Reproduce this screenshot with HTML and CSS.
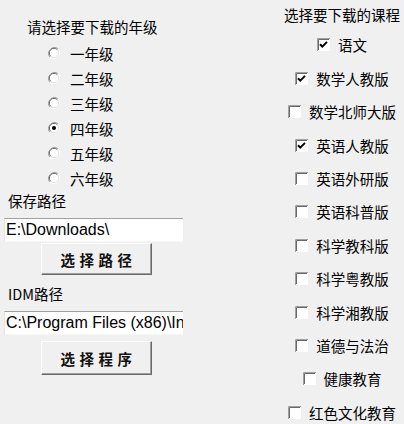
FILE: index.html
```html
<!DOCTYPE html>
<html lang="zh-CN">
<head>
<meta charset="utf-8">
<title>下载</title>
<link rel="stylesheet" href="styles.css">
</head>
<body>
<div class="app">
  <div class="left">
    <div class="title">请选择要下载的年级</div>
    <div class="radios">
      <div class="radio"><svg class="rb" viewBox="0 0 12 12"><path d="M10.2 1.8A6 6 0 0 0 1.8 10.2" fill="none" stroke="#a0a0a0"/><path d="M1.8 10.2A6 6 0 0 0 10.2 1.8" fill="none" stroke="#fff"/><circle cx="6" cy="6" r="4.6" fill="#fff"/><path d="M9.3 2.7A4.6 4.6 0 0 0 2.7 9.3" fill="none" stroke="#696969"/><path d="M2.7 9.3A4.6 4.6 0 0 0 9.3 2.7" fill="none" stroke="#e3e3e3"/></svg><span>一年级</span></div>
      <div class="radio"><svg class="rb" viewBox="0 0 12 12"><path d="M10.2 1.8A6 6 0 0 0 1.8 10.2" fill="none" stroke="#a0a0a0"/><path d="M1.8 10.2A6 6 0 0 0 10.2 1.8" fill="none" stroke="#fff"/><circle cx="6" cy="6" r="4.6" fill="#fff"/><path d="M9.3 2.7A4.6 4.6 0 0 0 2.7 9.3" fill="none" stroke="#696969"/><path d="M2.7 9.3A4.6 4.6 0 0 0 9.3 2.7" fill="none" stroke="#e3e3e3"/></svg><span>二年级</span></div>
      <div class="radio"><svg class="rb" viewBox="0 0 12 12"><path d="M10.2 1.8A6 6 0 0 0 1.8 10.2" fill="none" stroke="#a0a0a0"/><path d="M1.8 10.2A6 6 0 0 0 10.2 1.8" fill="none" stroke="#fff"/><circle cx="6" cy="6" r="4.6" fill="#fff"/><path d="M9.3 2.7A4.6 4.6 0 0 0 2.7 9.3" fill="none" stroke="#696969"/><path d="M2.7 9.3A4.6 4.6 0 0 0 9.3 2.7" fill="none" stroke="#e3e3e3"/></svg><span>三年级</span></div>
      <div class="radio"><svg class="rb" viewBox="0 0 12 12"><path d="M10.2 1.8A6 6 0 0 0 1.8 10.2" fill="none" stroke="#a0a0a0"/><path d="M1.8 10.2A6 6 0 0 0 10.2 1.8" fill="none" stroke="#fff"/><circle cx="6" cy="6" r="4.6" fill="#fff"/><path d="M9.3 2.7A4.6 4.6 0 0 0 2.7 9.3" fill="none" stroke="#696969"/><path d="M2.7 9.3A4.6 4.6 0 0 0 9.3 2.7" fill="none" stroke="#e3e3e3"/><circle cx="6" cy="6" r="2" fill="#000"/></svg><span>四年级</span></div>
      <div class="radio"><svg class="rb" viewBox="0 0 12 12"><path d="M10.2 1.8A6 6 0 0 0 1.8 10.2" fill="none" stroke="#a0a0a0"/><path d="M1.8 10.2A6 6 0 0 0 10.2 1.8" fill="none" stroke="#fff"/><circle cx="6" cy="6" r="4.6" fill="#fff"/><path d="M9.3 2.7A4.6 4.6 0 0 0 2.7 9.3" fill="none" stroke="#696969"/><path d="M2.7 9.3A4.6 4.6 0 0 0 9.3 2.7" fill="none" stroke="#e3e3e3"/></svg><span>五年级</span></div>
      <div class="radio"><svg class="rb" viewBox="0 0 12 12"><path d="M10.2 1.8A6 6 0 0 0 1.8 10.2" fill="none" stroke="#a0a0a0"/><path d="M1.8 10.2A6 6 0 0 0 10.2 1.8" fill="none" stroke="#fff"/><circle cx="6" cy="6" r="4.6" fill="#fff"/><path d="M9.3 2.7A4.6 4.6 0 0 0 2.7 9.3" fill="none" stroke="#696969"/><path d="M2.7 9.3A4.6 4.6 0 0 0 9.3 2.7" fill="none" stroke="#e3e3e3"/></svg><span>六年级</span></div>
    </div>
    <div class="label first">保存路径</div>
    <div class="edit">E:\Downloads\</div>
    <div class="btn">选择路径</div>
    <div class="label second">IDM路径</div>
    <div class="edit">C:\Program Files (x86)\Internet Download Manager\IDMan.exe</div>
    <div class="btn">选择程序</div>
  </div>
  <div class="right">
    <div class="title">选择要下载的课程</div>
    <div class="checks">
      <div class="check"><svg class="cb" viewBox="0 0 13 13"><rect x="0" y="0" width="13" height="13" fill="#fff"/><path d="M0.5 13V0.5H13" fill="none" stroke="#a0a0a0"/><path d="M1.5 12V1.5H12" fill="none" stroke="#696969"/><path d="M3 6.2l2.3 2.4L10 3.9" fill="none" stroke="#000" stroke-width="2"/></svg><span>语文</span></div>
      <div class="check"><svg class="cb" viewBox="0 0 13 13"><rect x="0" y="0" width="13" height="13" fill="#fff"/><path d="M0.5 13V0.5H13" fill="none" stroke="#a0a0a0"/><path d="M1.5 12V1.5H12" fill="none" stroke="#696969"/><path d="M3 6.2l2.3 2.4L10 3.9" fill="none" stroke="#000" stroke-width="2"/></svg><span>数学人教版</span></div>
      <div class="check"><svg class="cb" viewBox="0 0 13 13"><rect x="0" y="0" width="13" height="13" fill="#fff"/><path d="M0.5 13V0.5H13" fill="none" stroke="#a0a0a0"/><path d="M1.5 12V1.5H12" fill="none" stroke="#696969"/></svg><span>数学北师大版</span></div>
      <div class="check"><svg class="cb" viewBox="0 0 13 13"><rect x="0" y="0" width="13" height="13" fill="#fff"/><path d="M0.5 13V0.5H13" fill="none" stroke="#a0a0a0"/><path d="M1.5 12V1.5H12" fill="none" stroke="#696969"/><path d="M3 6.2l2.3 2.4L10 3.9" fill="none" stroke="#000" stroke-width="2"/></svg><span>英语人教版</span></div>
      <div class="check"><svg class="cb" viewBox="0 0 13 13"><rect x="0" y="0" width="13" height="13" fill="#fff"/><path d="M0.5 13V0.5H13" fill="none" stroke="#a0a0a0"/><path d="M1.5 12V1.5H12" fill="none" stroke="#696969"/></svg><span>英语外研版</span></div>
      <div class="check"><svg class="cb" viewBox="0 0 13 13"><rect x="0" y="0" width="13" height="13" fill="#fff"/><path d="M0.5 13V0.5H13" fill="none" stroke="#a0a0a0"/><path d="M1.5 12V1.5H12" fill="none" stroke="#696969"/></svg><span>英语科普版</span></div>
      <div class="check"><svg class="cb" viewBox="0 0 13 13"><rect x="0" y="0" width="13" height="13" fill="#fff"/><path d="M0.5 13V0.5H13" fill="none" stroke="#a0a0a0"/><path d="M1.5 12V1.5H12" fill="none" stroke="#696969"/></svg><span>科学教科版</span></div>
      <div class="check"><svg class="cb" viewBox="0 0 13 13"><rect x="0" y="0" width="13" height="13" fill="#fff"/><path d="M0.5 13V0.5H13" fill="none" stroke="#a0a0a0"/><path d="M1.5 12V1.5H12" fill="none" stroke="#696969"/></svg><span>科学粤教版</span></div>
      <div class="check"><svg class="cb" viewBox="0 0 13 13"><rect x="0" y="0" width="13" height="13" fill="#fff"/><path d="M0.5 13V0.5H13" fill="none" stroke="#a0a0a0"/><path d="M1.5 12V1.5H12" fill="none" stroke="#696969"/></svg><span>科学湘教版</span></div>
      <div class="check"><svg class="cb" viewBox="0 0 13 13"><rect x="0" y="0" width="13" height="13" fill="#fff"/><path d="M0.5 13V0.5H13" fill="none" stroke="#a0a0a0"/><path d="M1.5 12V1.5H12" fill="none" stroke="#696969"/></svg><span>道德与法治</span></div>
      <div class="check"><svg class="cb" viewBox="0 0 13 13"><rect x="0" y="0" width="13" height="13" fill="#fff"/><path d="M0.5 13V0.5H13" fill="none" stroke="#a0a0a0"/><path d="M1.5 12V1.5H12" fill="none" stroke="#696969"/></svg><span>健康教育</span></div>
      <div class="check"><svg class="cb" viewBox="0 0 13 13"><rect x="0" y="0" width="13" height="13" fill="#fff"/><path d="M0.5 13V0.5H13" fill="none" stroke="#a0a0a0"/><path d="M1.5 12V1.5H12" fill="none" stroke="#696969"/></svg><span>红色文化教育</span></div>
    </div>
  </div>
</div>
</body>
</html>
```
FILE: styles.css
```css
html, body {
  margin: 0;
  padding: 0;
  background: #f0f0f0;
}
body {
  width: 404px;
  height: 424px;
  overflow: hidden;
  font-family: "Noto Sans CJK SC", "Liberation Sans", sans-serif;
  font-size: 14.5px;
  color: #000;
}
.app {
  display: flex;
  height: 424px;
}
.left {
  width: 190px;
  display: flex;
  flex-direction: column;
  padding-top: 17px;
}
.left .title {
  height: 20px;
  line-height: 20px;
  padding-left: 27px;
}
.radios {
  margin-top: 3.5px;
  display: flex;
  flex-direction: column;
}
.radio {
  height: 25px;
  display: flex;
  align-items: center;
  padding-left: 48px;
}
.rb {
  width: 12px;
  height: 12px;
  margin-right: 10px;
  flex: none;
}
.label {
  height: 20px;
  line-height: 20px;
  padding-left: 8px;
}
.label.first { margin-top: 0.5px; }
.label.second { margin-top: 9px; }
.edit {
  margin-top: 7px;
  margin-left: 4px;
  width: 177px;
  height: 22px;
  line-height: 22px;
  background: #fff;
  border-top: 1px solid #a0a0a0;
  border-left: 1px solid #e3e3e3;
  border-bottom: 1px solid #f7f7f7;
  font-family: "Liberation Sans", Arial, sans-serif;
  font-size: 16px;
  padding-left: 1px;
  white-space: nowrap;
  overflow: hidden;
}
.btn {
  margin-top: 1px;
  margin-left: 41px;
  width: 111px;
  height: 32px;
  box-sizing: border-box;
  border: 1px solid;
  border-color: #fff #696969 #696969 #fff;
  box-shadow: inset -1px -1px 0 #a0a0a0;
  background: #f0f0f0;
  display: flex;
  align-items: center;
  justify-content: center;
  font-weight: bold;
  font-size: 14.5px;
  letter-spacing: 4.5px;
  padding-left: 4px;
  color: #111;
}
.edit + .btn { margin-top: 1px; }
.label.second + .edit { margin-top: 7px; }
.label.second + .edit + .btn { margin-top: 6px; height: 34px; }
.right {
  width: 124px;
  margin-left: 90px;
  display: flex;
  flex-direction: column;
  align-items: center;
  padding-top: 5px;
}
.right .title {
  height: 20px;
  line-height: 20px;
  white-space: nowrap;
}
.checks {
  margin-top: 3.3px;
  display: flex;
  flex-direction: column;
  align-items: center;
}
.check {
  height: 33.4px;
  display: flex;
  align-items: center;
  white-space: nowrap;
}
.cb {
  width: 13px;
  height: 13px;
  margin-right: 8px;
  flex: none;
}
```
